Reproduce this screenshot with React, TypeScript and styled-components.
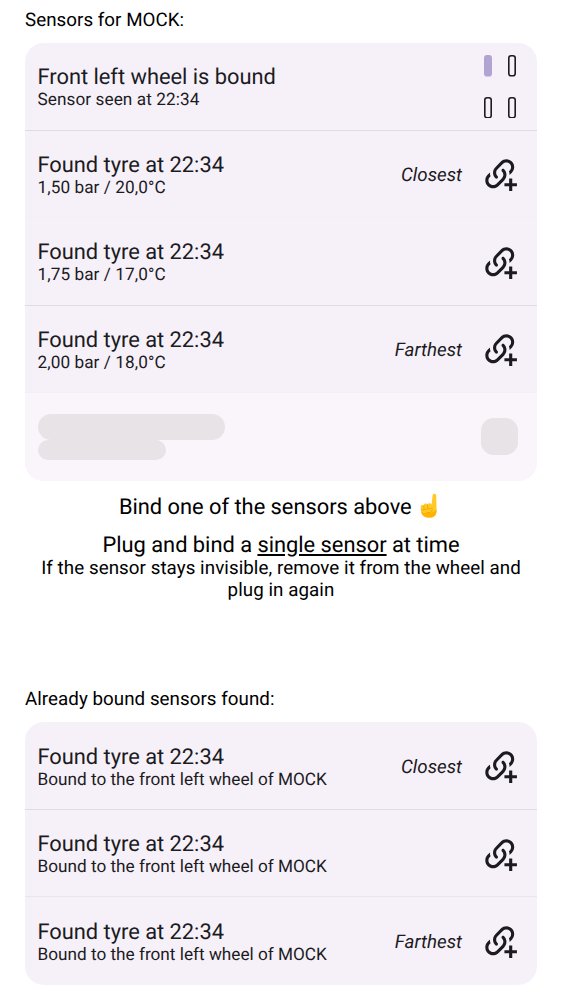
import React from "react";
import styled, { createGlobalStyle } from "styled-components";

const GlobalStyle = createGlobalStyle`
  body {
    margin: 0;
    background: #fff;
    color: #000;
    font-family: Roboto, "Noto Sans", sans-serif;
    text-rendering: geometricPrecision;
  }
`;

const Page = styled.main`
  box-sizing: border-box;
  width: 562px;
  height: 1000px;
  padding: 9px 25px 0;
  overflow: hidden;
`;

const Heading = styled.h2`
  margin: 0 0 11px;
  font-size: 18.75px;
  font-weight: 400;
  line-height: 23px;
  letter-spacing: 0.04px;
`;

const Card = styled.section`
  overflow: hidden;
  border-radius: 18.75px;
  background: #f6f1f9;
  color: #1c1b1f;
`;

const Row = styled.div<{ $divider?: string; $faded?: boolean }>`
  box-sizing: border-box;
  display: flex;
  align-items: center;
  height: 87.5px;
  padding: 0.5px 19px 0 12.5px;
  border-bottom: 1px solid ${(p) => p.$divider ?? "transparent"};
  background: ${(p) => (p.$faded ? "#faf5fb" : "transparent")};
`;

const Labels = styled.div`
  flex: 1;
  padding-top: 3.3px;
`;

const Bones = styled.div`
  flex: 1;
`;

const Title = styled.div`
  font-size: 21.875px;
  line-height: 26px;
  letter-spacing: -0.02px;
`;

const Subtitle = styled.div<{ $wide?: boolean }>`
  font-size: 17.19px;
  line-height: 19.5px;
  letter-spacing: ${(p) => (p.$wide ? "0.07px" : "0")};
`;

const Distance = styled.span`
  margin-right: 18.5px;
  padding-top: 1.5px;
  font-size: 18.75px;
  font-style: italic;
`;

const Wheels = styled.div`
  display: grid;
  grid-template-columns: 8px 8px;
  gap: 20px 15.5px;
  padding: 0.8px 2.5px 0 0;
`;

const Wheel = styled.svg`
  display: block;
  width: 8px;
  height: 21.5px;
`;

const Bone = styled.div<{ $w: number; $h: number; $r: number }>`
  width: ${(p) => p.$w}px;
  height: ${(p) => p.$h}px;
  border-radius: ${(p) => p.$r}px;
  background: #e8e3e7;
`;

const Hint = styled.div`
  margin-top: 12px;
  text-align: center;
`;

const HintTitle = styled.p`
  margin: 0 0 12.5px;
  font-size: 21.875px;
  line-height: 26px;
  letter-spacing: -0.02px;
`;

const HintText = styled.p`
  margin: -14px 0 0;
  font-size: 18.75px;
  line-height: 22px;
  letter-spacing: 0.06px;
`;

const Hand = styled.svg`
  width: 26px;
  height: 26px;
  vertical-align: -5.5px;
`;

const Bound = styled.div`
  margin-top: 87.3px;
`;

const LinkPlus = () => (
  <svg width="37.5" height="37.5" viewBox="0 0 24 24" fill="#1c1b1f" aria-hidden="true">
    <path d="M10.59 13.41C11 13.8 11 14.44 10.59 14.83C10.2 15.22 9.56 15.22 9.17 14.83C7.22 12.88 7.22 9.71 9.17 7.76L12.71 4.22C14.66 2.27 17.83 2.27 19.78 4.22C21.73 6.17 21.73 9.34 19.78 11.29L18.29 12.78C18.3 11.96 18.17 11.14 17.89 10.36L18.36 9.88C19.54 8.71 19.54 6.81 18.36 5.64C17.19 4.46 15.29 4.46 14.12 5.64L10.59 9.17C9.41 10.34 9.41 12.24 10.59 13.41M13.41 9.17C13.8 8.78 14.44 8.78 14.83 9.17C16.78 11.12 16.78 14.29 14.83 16.24L11.29 19.78C9.34 21.73 6.17 21.73 4.22 19.78C2.27 17.83 2.27 14.66 4.22 12.71L5.71 11.22C5.7 12.04 5.83 12.86 6.11 13.65L5.64 14.12C4.46 15.29 4.46 17.19 5.64 18.36C6.81 19.54 8.71 19.54 9.88 18.36L13.41 14.83C14.59 13.66 14.59 11.76 13.41 10.59C13 10.2 13 9.56 13.41 9.17M20 15H18V18H15V20H18V23H20V20H23V18H20V15Z" />
  </svg>
);

const Tyre = ({ active }: { active?: boolean }) => (
  <Wheel viewBox="0 0 8 21.5">
    <rect
      x="0.8"
      y="0.8"
      width="6.4"
      height="19.9"
      rx="2.3"
      fill={active ? "#b1a3d2" : "none"}
      stroke={active ? "#b1a3d2" : "#1c1b1f"}
      strokeWidth="1.6"
    />
  </Wheel>
);

const PointUp = () => (
  <Hand viewBox="1 0.3 26 26" role="img" aria-label="Pointing up">
    <path
      d="M16.6 2.6C16.8 .4 20.2.4 20.2 2.8L20.6 17C20.8 22 18.2 24.9 13.8 24.9C8.2 24.9 5.2 22 4.9 17.5L4.7 14.2C4.7 12.5 6.6 11.9 7.7 12.8C7.8 10.8 10.5 10.3 11.5 11.7C12.3 10 14.8 10.3 15.6 11.8Z"
      fill="#ffca28"
    />
    <path d="M5 18.2C6.5 20.5 9 20.4 11 20C14 20.6 17 19.5 20.5 17.2C20.8 22 18.2 24.9 13.8 24.9C8.4 24.9 5.4 22.3 5 18.2Z" fill="#ffb300" />
    <path
      d="M7.9 13V16.2M11.6 12V15.4M5.2 17.2C7 18.2 8.5 16.5 10.5 16.3C13 16 15 16.6 16.4 15M11 19.8C14 20.5 15.8 19.2 16.4 17"
      fill="none"
      stroke="#f0a000"
      strokeWidth="0.8"
      strokeLinecap="round"
    />
  </Hand>
);

interface SensorProps {
  detail: string;
  distance?: string;
  divider?: string;
  wide?: boolean;
}

const Sensor = ({ detail, distance, divider, wide }: SensorProps) => (
  <Row $divider={divider}>
    <Labels>
      <Title>Found tyre at 22:34</Title>
      <Subtitle $wide={wide}>{detail}</Subtitle>
    </Labels>
    {distance && <Distance>{distance}</Distance>}
    <LinkPlus />
  </Row>
);

const BOUND = "Bound to the front left wheel of MOCK";

export default function App() {
  return (
    <Page>
      <GlobalStyle />
      <Heading>Sensors for MOCK:</Heading>
      <Card>
        <Row $divider="#dfdae5">
          <Labels>
            <Title>Front left wheel is bound</Title>
            <Subtitle $wide>Sensor seen at 22:34</Subtitle>
          </Labels>
          <Wheels>
            <Tyre active />
            <Tyre />
            <Tyre />
            <Tyre />
          </Wheels>
        </Row>
        <Sensor wide detail="1,50 bar / 20,0°C" distance="Closest" divider="#f4eff7" />
        <Sensor wide detail="1,75 bar / 17,0°C" divider="#dfdae5" />
        <Sensor wide detail="2,00 bar / 18,0°C" distance="Farthest" divider="#f3eef5" />
        <Row $faded>
          <Bones>
            <Bone $w={187.5} $h={26} $r={13} />
            <Bone $w={128.5} $h={20} $r={10} />
          </Bones>
          <Bone $w={37.5} $h={37.5} $r={12.5} />
        </Row>
      </Card>
      <Hint>
        <HintTitle>
          Bind one of the sensors above <PointUp />
        </HintTitle>
        <HintTitle>
          Plug and bind a <u>single sensor</u> at time
        </HintTitle>
        <HintText>If the sensor stays invisible, remove it from the wheel and plug in again</HintText>
      </Hint>
      <Bound>
        <Heading>Already bound sensors found:</Heading>
        <Card>
          <Sensor detail={BOUND} distance="Closest" divider="#dfdae5" />
          <Sensor detail={BOUND} divider="#e9e4ed" />
          <Sensor detail={BOUND} distance="Farthest" />
        </Card>
      </Bound>
    </Page>
  );
}
